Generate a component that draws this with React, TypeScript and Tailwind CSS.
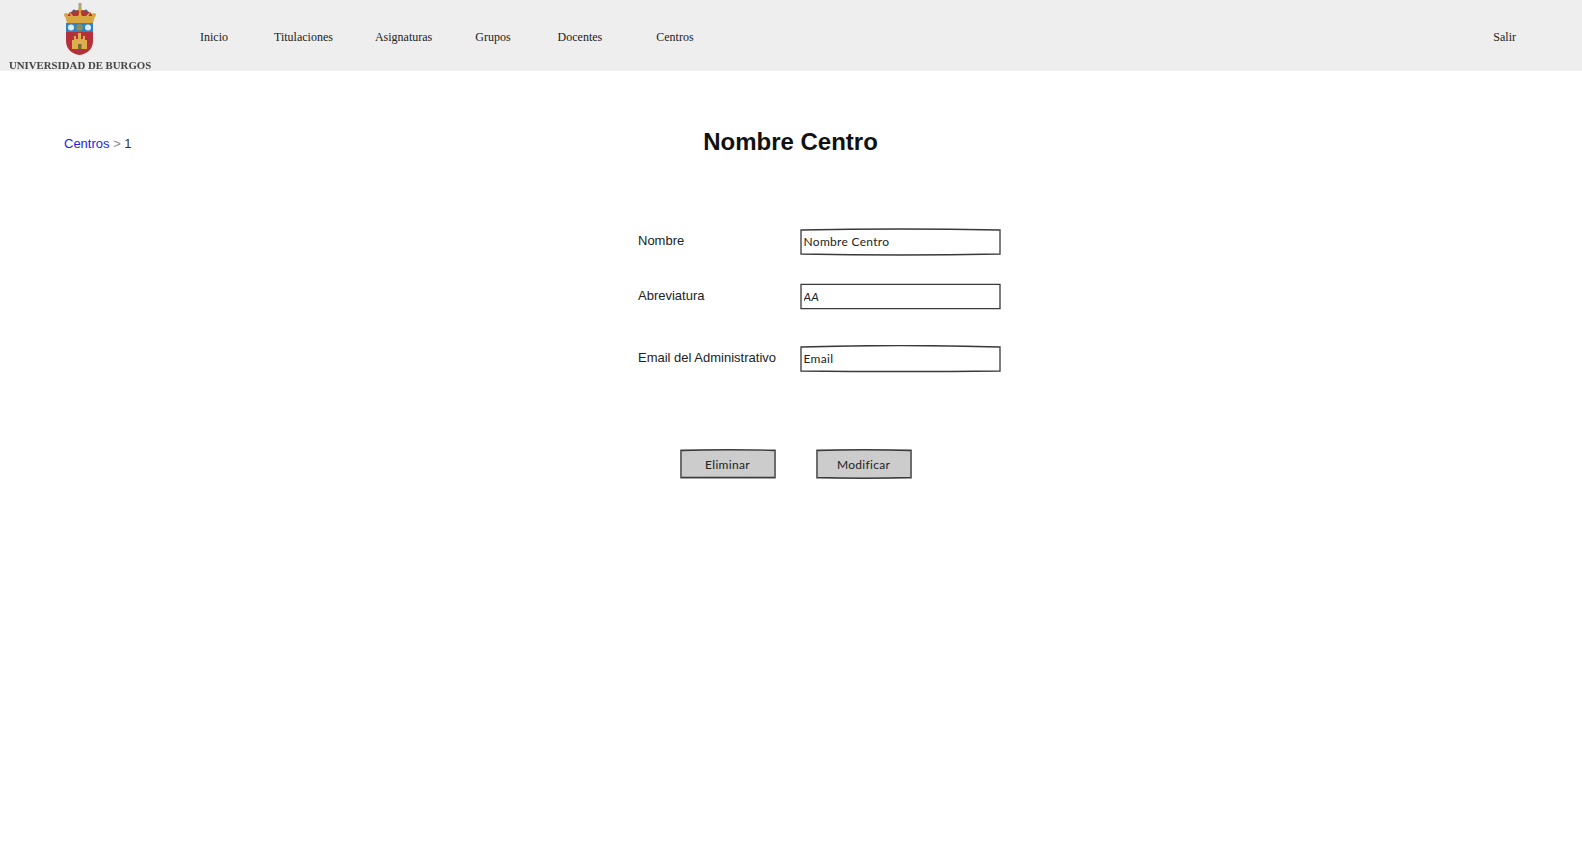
import React from 'react';

const sansFont = "font-['Liberation_Sans',Arial,sans-serif]";
const sketchFont = "font-['Lato','Open_Sans',sans-serif]";

const navItems = [
  { label: 'Inicio', className: 'ml-[50px]' },
  { label: 'Titulaciones', className: 'ml-[46px]' },
  { label: 'Asignaturas', className: 'ml-[42px]' },
  { label: 'Grupos', className: 'ml-[43px]' },
  { label: 'Docentes', className: 'ml-[47px]' },
  { label: 'Centros', className: 'ml-[54px]' },
];

function Logo() {
  return (
    <div className="flex h-[71px] w-[152px] flex-col">
      <svg width="34" height="56" viewBox="0 0 34 56" className="mt-[1px] ml-[63px] shrink-0 blur-[0.5px]">
        <path d="M15.500 2h3v7h-3z" fill="#a9a77a" />
        <path d="M4 16c1-5 6-7 13-7s12 2 13 7z" fill="#b5342f" />
        <path d="M6 10l5 6h-3zM17 8l2 8h-4zM28 10l-3 6h-3z" fill="#d9a94a" />
        <circle cx="3" cy="14" r="2" fill="#d6a53f" />
        <circle cx="11" cy="10" r="1.600" fill="#3f5f86" />
        <circle cx="17" cy="9" r="1.800" fill="#d6a53f" />
        <circle cx="23" cy="10" r="1.600" fill="#3f5f86" />
        <circle cx="31" cy="14" r="2" fill="#d6a53f" />
        <path d="M2 15h30l-2 7H4z" fill="#d8a743" />
        <path d="M3 22h27v9H3z" fill="#2f82c4" />
        <circle cx="8" cy="26.500" r="3" fill="#e4ebf0" />
        <circle cx="16.500" cy="26.500" r="3.200" fill="#8a8f55" />
        <circle cx="25" cy="26.500" r="3" fill="#e4ebf0" />
        <path d="M3 31h27v9c0 8-6 13-13.500 14C9 53 3 48 3 40z" fill="#b4303a" />
        <path d="M9 48v-9h2v-4h2v3h2v-6h3v6h2v-3h2v4h2v9z" fill="#dcae4c" />
        <path d="M15 48v-5h3.500v5z" fill="#7c6a34" />
      </svg>
      <span className="mt-[2px] ml-[9px] font-['Liberation_Serif',serif] text-[10.8px] leading-[12px] font-bold whitespace-nowrap text-[#444444] blur-[0.3px]">
        UNIVERSIDAD DE BURGOS
      </span>
    </div>
  );
}

function Header() {
  return (
    <header className="flex h-[71px] items-center bg-[#eeeeee] font-['Liberation_Serif',serif] text-[12px] text-[#222222]">
      <Logo />
      <nav className="-ml-[2px] flex items-center pt-[3px]">
        {navItems.map((item) => (
          <a key={item.label} href="#" className={item.className}>
            {item.label}
          </a>
        ))}
      </nav>
      <a href="#" className="mr-[66px] ml-auto pt-[3px]">
        Salir
      </a>
    </header>
  );
}

function SketchInput({
  value,
  path,
  className,
  italic,
}: {
  value: string;
  path: string;
  className: string;
  italic?: boolean;
}) {
  return (
    <div className={`relative w-[201px] ${className}`}>
      <input
        readOnly
        defaultValue={value}
        className={`h-full w-full bg-transparent pb-[1px] pl-[4px] text-[12px] tracking-[0.3px] text-[#222222] outline-none ${
          italic ? 'italic' : ''
        } ${sketchFont}`}
      />
      <svg
        viewBox="0 0 201 28"
        preserveAspectRatio="none"
        className="pointer-events-none absolute inset-0 h-full w-full"
      >
        <path
          d={path}
          fill="none"
          stroke="#3a3a3a"
          strokeWidth="1.3"
          vectorEffect="non-scaling-stroke"
        />
      </svg>
    </div>
  );
}

function FormRow({
  label,
  value,
  path,
  className,
  inputClassName,
  italic,
}: {
  label: string;
  value: string;
  path: string;
  className: string;
  inputClassName: string;
  italic?: boolean;
}) {
  return (
    <div className={`flex items-center ${className}`}>
      <label className="w-[161.500px] pb-[2px] text-[13px] text-[#222222]">{label}</label>
      <SketchInput value={value} path={path} className={inputClassName} italic={italic} />
    </div>
  );
}

function SketchButton({ label, path }: { label: string; path: string }) {
  return (
    <button
      type="button"
      className={`relative h-[30px] w-[96px] bg-[#cccccc] text-[12px] tracking-[0.3px] text-[#222222] ${sketchFont}`}
    >
      <span className="relative top-[1px]">{label}</span>
      <svg
        viewBox="0 0 96 30"
        preserveAspectRatio="none"
        className="pointer-events-none absolute inset-0 h-full w-full"
      >
        <path d={path} fill="none" stroke="#3a3a3a" strokeWidth="1.3" />
      </svg>
    </button>
  );
}

export default function App() {
  return (
    <div className={`min-h-[858px] bg-white ${sansFont}`}>
      <Header />
      <main>
        <div className="grid grid-cols-[1fr_auto_1fr] items-center px-[64px] pt-[55px]">
          <div className="pt-[4px] text-[13px] leading-[20px]">
            <a href="#" className="text-[#2222ee]">
              Centros
            </a>
            <span className="text-[#888888]"> &gt; </span>
            <span className="text-[#333333]">1</span>
          </div>
          <h1 className="pr-[1px] text-[24px] leading-[32px] font-bold text-[#111111]">
            Nombre Centro
          </h1>
          <div />
        </div>

        <form className="mt-[70px] ml-[638px] w-[363px]">
          <FormRow
            label="Nombre"
            value="Nombre Centro"
            className=""
            inputClassName="h-[28px]"
            path="M1 2Q100 0 200 2V26Q100 28 1 26Z"
          />
          <FormRow
            label="Abreviatura"
            value="AA"
            italic
            className="mt-[27px]"
            inputClassName="h-[27px]"
            path="M1 1.500H200V26.500H1Z"
          />
          <FormRow
            label="Email del Administrativo"
            value="Email"
            className="mt-[35px]"
            inputClassName="h-[28px]"
            path="M1 2Q100 -1 200 2V26Q100 27 1 26Z"
          />

          <div className="mt-[76px] ml-[41.500px] flex gap-[40px]">
            <SketchButton label="Eliminar" path="M1 1.500Q48 0 95 1.500V28.500H1Z" />
            <SketchButton label="Modificar" path="M1 1.500Q48 0 95 1.500V28.500Q48 30 1 28.500Z" />
          </div>
        </form>
      </main>
    </div>
  );
}
